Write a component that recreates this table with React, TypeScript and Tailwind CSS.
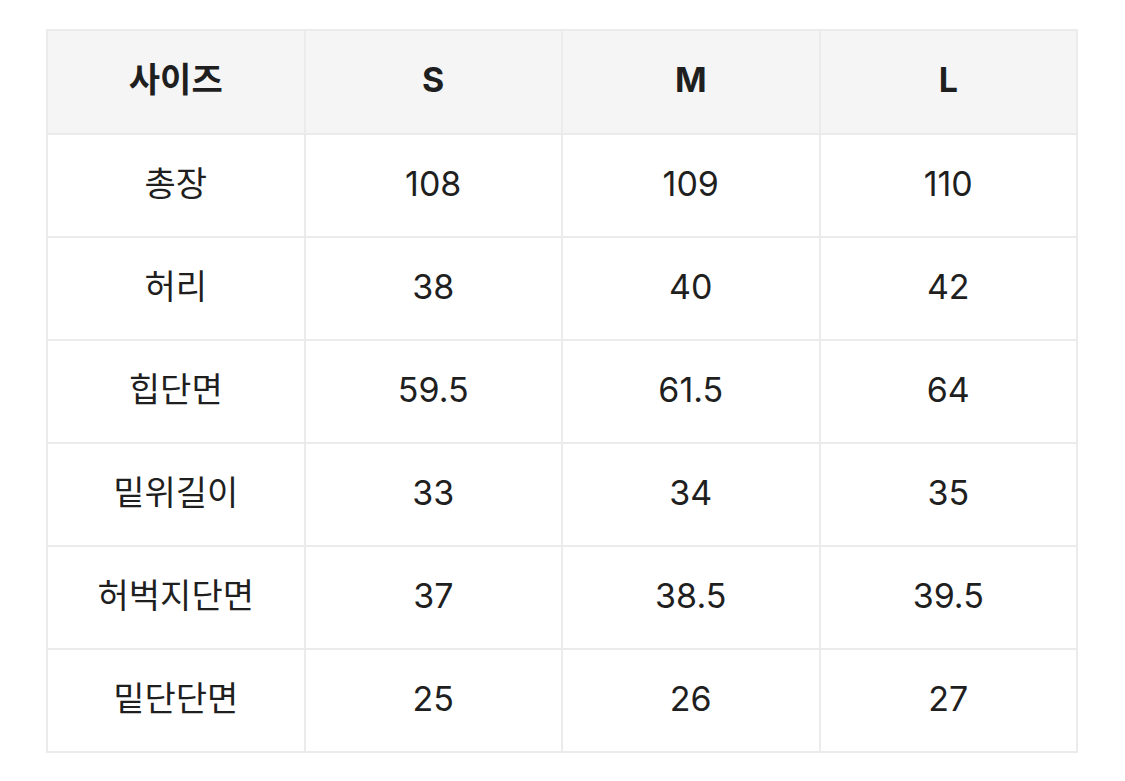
const headers = ["사이즈", "S", "M", "L"];

const rows: [string, string, string, string][] = [
  ["총장", "108", "109", "110"],
  ["허리", "38", "40", "42"],
  ["힙단면", "59.5", "61.5", "64"],
  ["밑위길이", "33", "34", "35"],
  ["허벅지단면", "37", "38.5", "39.5"],
  ["밑단단면", "25", "26", "27"],
];

export default function App() {
  return (
    <div className="min-h-screen bg-white pt-[29px] pl-[46px] font-['Inter','Noto_Sans_CJK_KR',sans-serif] text-[#1f1f1f]">
      <table className="w-[1032px] table-fixed border-collapse">
        <thead>
          <tr className="h-[104px] bg-[#f5f5f5]">
            {headers.map((h) => (
              <th
                key={h}
                className="border-2 border-[#ebebeb] pb-[5px] text-center text-[34px] font-bold"
              >
                {h}
              </th>
            ))}
          </tr>
        </thead>
        <tbody>
          {rows.map((row) => (
            <tr key={row[0]} className="h-[103px]">
              {row.map((cell, i) => (
                <td
                  key={i}
                  className="border-2 border-[#ebebeb] pb-[5px] text-center text-[34px] font-normal"
                >
                  {cell}
                </td>
              ))}
            </tr>
          ))}
        </tbody>
      </table>
    </div>
  );
}
